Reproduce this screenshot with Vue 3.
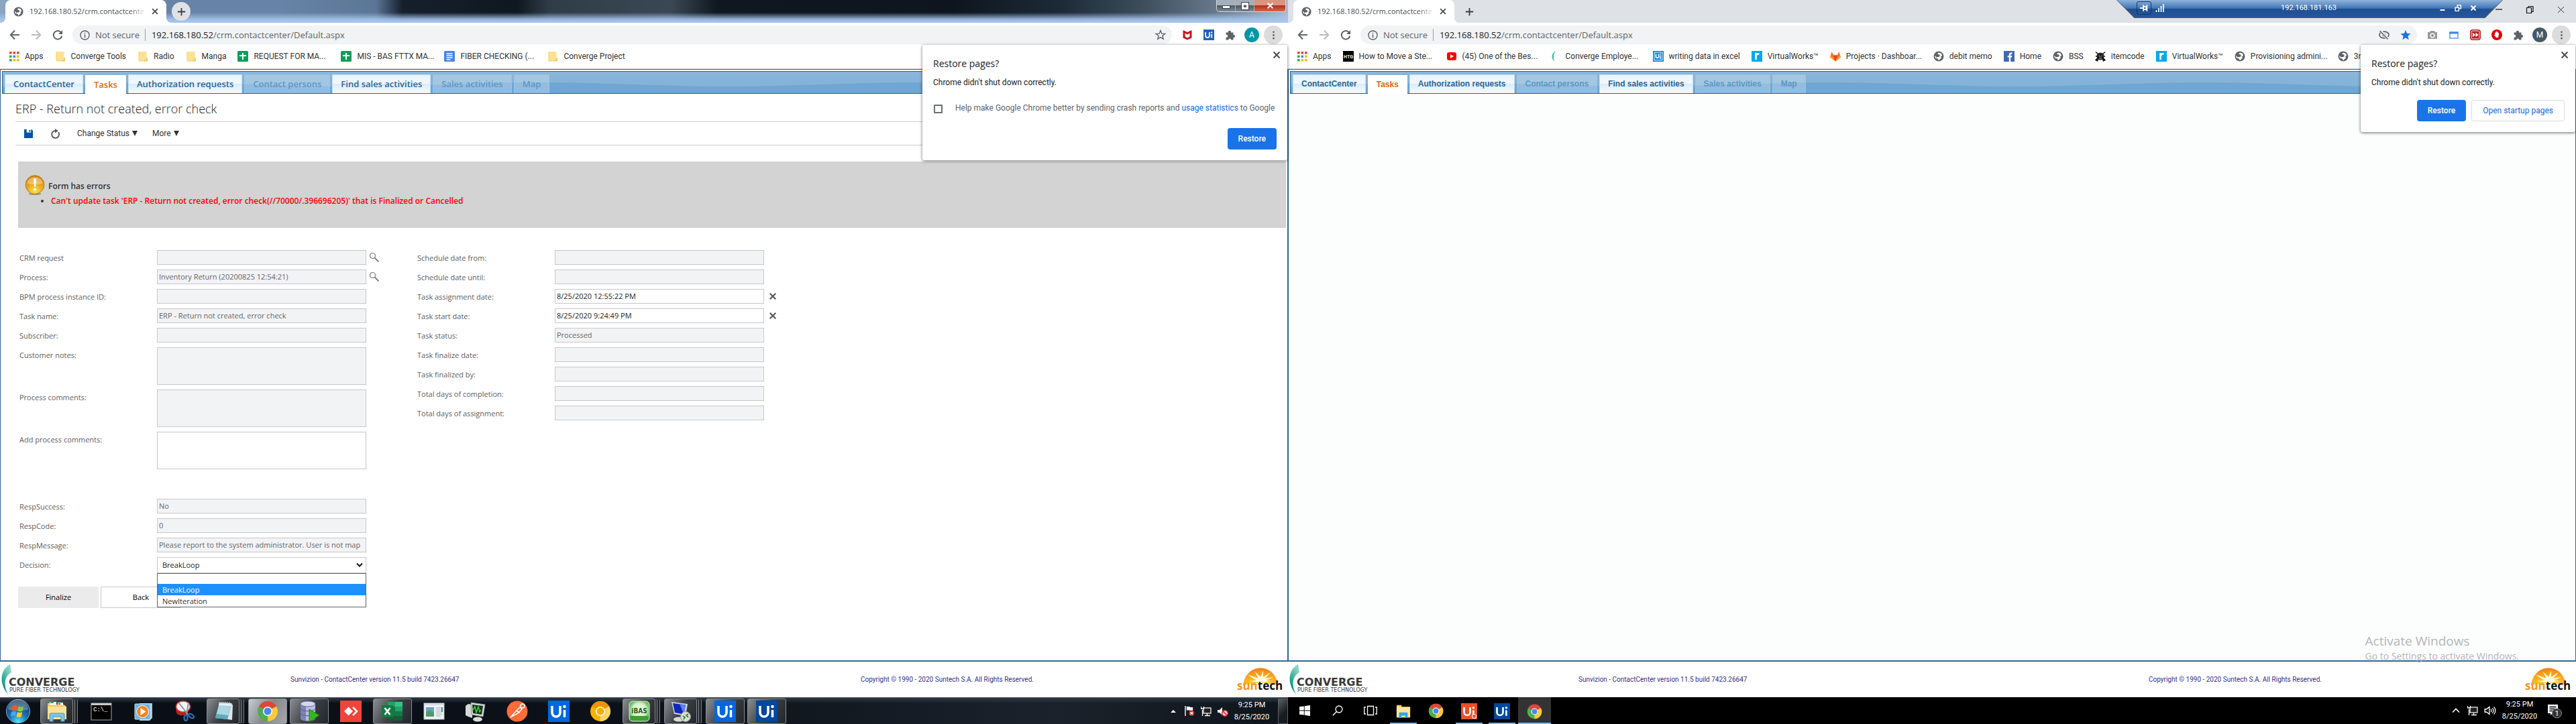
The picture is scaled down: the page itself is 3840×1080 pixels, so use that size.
<script setup>
import { h, ref } from 'vue'

const chromeLogo = (dark) => `
  <circle cx="16" cy="16" r="15" fill="${dark ? '#f5b400' : '#4caf50'}"/>
  <path d="M16 16 3 8.500A15 15 0 0 1 29 8.500Z" fill="${dark ? '#ee9300' : '#e0453a'}"/>
  <path d="M16 16 29 8.500A15 15 0 0 1 16 31Z" fill="${dark ? '#fdd663' : '#fdc93b'}"/>
  <path d="M16 9H29.300L28 7H6Z" fill="${dark ? '#ee9300' : '#e0453a'}"/>
  <circle cx="16" cy="16" r="7" fill="#fff"/><circle cx="16" cy="16" r="5.500" fill="${dark ? '#f9ab00' : '#4688f1'}"/>`

const uiTile = (bg) => `<rect width="32" height="32" fill="${bg}"/>
  <path d="M6 8v10a6 6 0 0 0 12 0V8" fill="none" stroke="#fff" stroke-width="3.500"/>
  <path d="M24.500 14v11" stroke="#fff" stroke-width="3.500"/><circle cx="24.500" cy="9" r="2.300" fill="#fff"/>`

const icons = {
  globe: [16, '<circle cx="8" cy="8" r="7.500" fill="#5f6368"/><path d="M8 2.500 6 4.500l3 1 1 2-2 1.500H5.500l-1 1.500L7 12l1 2.500 2-2.500 2-1.500-1-2 2-1.500-1-3-2-1Z" fill="#fff"/><path d="m2 7 2 1.500 1 3-2-1Z" fill="#fff"/>'],
  close: [16, '<path d="m3.500 3.500 9 9m0-9-9 9" stroke="#4a4d51" stroke-width="2"/>'],
  closeThin: [16, '<path d="m2.500 2.500 11 11m0-11-11 11" stroke="#222" stroke-width="1.100"/>'],
  plus: [16, '<path d="M8 2v12M2 8h12" stroke="#3c4043" stroke-width="2"/>'],
  back: [16, '<path d="M15 8H2m6-6.500L1.800 8 8 14.500" fill="none" stroke="#5f6368" stroke-width="2"/>'],
  forward: [16, '<path d="M1 8h13M8 1.500 14.200 8 8 14.500" fill="none" stroke="#babcbe" stroke-width="2"/>'],
  reload: [16, '<path d="M13.200 4.500A6.300 6.300 0 1 0 14.300 9.500" fill="none" stroke="#5f6368" stroke-width="2"/><path d="M15 1v6H9Z" fill="#5f6368"/>'],
  info: [16, '<circle cx="8" cy="8" r="7" fill="none" stroke="#5f6368" stroke-width="1.500"/><path d="M8 7v5M8 4v1.700" stroke="#5f6368" stroke-width="1.600"/>'],
  star: [16, '<path d="m8 1.500 1.800 4.600 4.900.3-3.800 3.100 1.300 4.800L8 11.600l-4.200 2.700 1.300-4.800L1.300 6.400l4.900-.3Z" fill="none" stroke="#5f6368" stroke-width="1.400"/>'],
  starOn: [16, '<path d="m8 .8 2 5 5.500.4-4.200 3.500 1.400 5.500L8 12.200l-4.700 3 1.400-5.500L.5 6.200 6 5.800Z" fill="#1a73e8"/>'],
  eyeOff: [16, '<ellipse cx="8" cy="8" rx="7" ry="4.800" fill="none" stroke="#5f6368" stroke-width="1.800"/><circle cx="8" cy="8" r="2.600" fill="#5f6368"/><path d="m2 1.500 12 13" stroke="#f1f3f4" stroke-width="4"/><path d="m1.500 2 12 12.500" stroke="#5f6368" stroke-width="1.600"/>'],
  shield: [16, '<path d="M1.500 1 8 4l6.500-3v11.500L8 15.500l-6.500-3Z" fill="#c8141e"/><path d="M4.500 5.500 8 7.500l3.500-2v5L8 12.500l-3.500-2Z" fill="#fff"/>'],
  uiBlue: [32, uiTile('#1f66b4')],
  puzzle: [16, '<path d="M1.500 4.500h3.300a2.200 2.200 0 1 1 4.200 0h3.500V8a2.100 2.100 0 1 1 0 4.100v3.400H9.200a2 2 0 1 0-4 0H1.500v-3.700a2.100 2.100 0 1 0 0-4Z" fill="#5f6368"/>'],
  dots: [16, '<circle cx="8" cy="3" r="1.500" fill="#5f6368"/><circle cx="8" cy="8" r="1.500" fill="#5f6368"/><circle cx="8" cy="13" r="1.500" fill="#5f6368"/>'],
  camera: [16, '<path d="M1 4h3l1-2h6l1 2h3v10H1Z" fill="#9a9a9a"/><circle cx="8" cy="9" r="3.600" fill="#fff"/><circle cx="8" cy="9" r="2" fill="#8a8a8a"/>'],
  windowed: [16, '<rect x="2" y="4" width="12" height="9" fill="#fff" stroke="#5b9bf0" stroke-width="1.500"/><path d="M1.500 5h13" stroke="#4285f4" stroke-width="3"/>'],
  forwardRed: [16, '<rect x=".8" y=".8" width="14.400" height="14.400" rx="3" fill="#fff" stroke="#b3201f" stroke-width="1.600"/><rect x="2.500" y="2.500" width="11" height="11" fill="#b3201f"/><path d="m4 4.500 4 3.500-4 3.500Zm4.500 0 4 3.500-4 3.500Z" fill="#fff"/>'],
  hand: [16, '<circle cx="8" cy="8" r="8" fill="#e60000"/><path d="M5 8V5h1V3.500h1.200V3h1.400v.7h1.200V5h1v3.500L10 12H7L4 8.500Z" fill="#fff"/>'],
  apps: [16, '<g fill="#ea4335"><path d="M1 1h3.500v3.500H1ZM6.500 1H10v3.500H6.500ZM12 1h3.500v3.500H12Z"/></g><path d="M1 6.500h3.500V10H1ZM1 12h3.500v3.500H1Z" fill="#34a853"/><path d="M6.500 6.500H10V10H6.500Z" fill="#4285f4"/><path d="M12 6.500h3.500V10H12ZM6.500 12H10v3.500H6.500ZM12 12h3.500v3.500H12Z" fill="#fbbc05"/>'],
  folder: [16, '<path d="M2 1h11.500v14H2Z" fill="#fde293"/><path d="M10 14.500h4V10" fill="none" stroke="#f0bf3c" stroke-width="1.500"/><path d="M2 1v14h11" fill="none" stroke="#f3cf68"/>'],
  sheet: [16, '<rect width="16" height="16" rx="1.500" fill="#0f9d58"/><path d="M8 3v10M3 7h10" stroke="#fff" stroke-width="2"/>'],
  doc: [16, '<rect width="16" height="16" rx="1.500" fill="#4285f4"/><path d="M3.500 4h9M3.500 7h9M3.500 10h9M3.500 13h6" stroke="#fff" stroke-width="1.500"/>'],
  htg: [16, '<rect width="16" height="16" fill="#000"/><text x="8" y="11" font-family="Roboto, sans-serif" font-size="7" font-weight="700" text-anchor="middle" fill="#eee">HTG</text>'],
  youtube: [16, '<rect x="1" y="2" width="14" height="12" rx="3" fill="#f00"/><path d="m6 5 5 3-5 3Z" fill="#fff"/>'],
  swoosh: [16, '<path d="M9 0C2 4 2 11 7.500 16 5 11 5.500 5 9 0Z" fill="#3dbfa5"/>'],
  uiFrame: [16, '<rect x=".8" y=".8" width="14.400" height="14.400" fill="#fff" stroke="#0a7fd0" stroke-width="1.600"/><rect x="2.500" y="2.500" width="11" height="11" fill="#0a8ad8"/><path d="M4.500 4.500v4a2 2 0 0 0 4 0v-4M11 6.500V12M11 4v1.500" fill="none" stroke="#fff" stroke-width="1.500"/>'],
  virtual: [16, '<rect width="16" height="16" fill="#00a9ee"/><path d="M6.500 3v10M6.500 8c.5-3 2-4 5-3.800" fill="none" stroke="#fff" stroke-width="2.600"/>'],
  gitlab: [16, '<path d="M8 15.500 0 9.500 2.600 1l2.600 5.500h5.600L13.400 1 16 9.500Z" fill="#fc6d26"/><path d="m8 15.500-2.800-9h5.600Z" fill="#e24329"/><path d="m8 15.500-8-6 1.200-3Zm0 0 8-6-1.200-3Z" fill="#fca326"/>'],
  facebook: [16, '<rect width="16" height="16" fill="#4267b2"/><path d="M10.200 16V9.500H12l.4-2.300h-2.200V5.700c0-.8.400-1.200 1.200-1.200h1.100V2.300C10 1.900 7.800 2.500 7.800 5.300v1.900H5.700v2.300h2.100V16Z" fill="#fff"/>'],
  spider: [16, '<circle cx="8" cy="8" r="5.500" fill="#222"/><path d="M1 1.500 5 5M15 1.500 11 5M.5 14 4.500 10l-1 5.500M15.500 14 11.500 10l1 5.500M3 8H1M13 8h2" stroke="#111" stroke-width="1.500"/><path d="m5.500 7 2 1.500M10.500 7l-2 1.500M6 11h4" stroke="#aaa"/>'],
  save: [14, '<path d="M0 0h11.500L14 2v12H0Z" fill="#00549f"/><path d="M4 0h7v5H4Z" fill="#fff"/><path d="M8 1h2v3H8Z" fill="#00549f"/>'],
  refresh: [16, '<path d="M12.800 5.500A5.800 5.800 0 1 1 8 3.200" fill="none" stroke="#555" stroke-width="1.900"/><path d="m7.500 0 5 3.300-5 3.500Z" fill="#555"/>'],
  alert: [32, '<defs><radialGradient id="amber" cx=".5" cy=".85" r=".9"><stop offset="0" stop-color="#ffe14a"/><stop offset=".5" stop-color="#e9a71c"/><stop offset="1" stop-color="#c47c10"/></radialGradient></defs><ellipse cx="16" cy="30" rx="10" ry="2" fill="#a09a85"/><circle cx="16" cy="15.500" r="14.800" fill="url(#amber)" stroke="#b5791a"/><path d="M3 13A13.500 13.500 0 0 1 29 13Q16 17 3 13Z" fill="#fff" opacity=".35"/><path d="M14 5.500h4.200L17.200 19h-2.200Z" fill="#fff"/><circle cx="16" cy="23" r="2.200" fill="#fff"/>'],
  lens: [16, '<circle cx="5.500" cy="5.500" r="4" fill="#fff" stroke="#777" stroke-width="1.200"/><path d="m8.500 8.500 6 6" stroke="#666" stroke-width="1.700"/>'],
  clear: [14, '<path d="m2 2 10 10M12 2 2 12" stroke="#5a5a5a" stroke-width="2.600"/>'],
  orb: [40, '<defs><radialGradient id="orb" cx=".5" cy=".95" r=".9"><stop offset="0" stop-color="#5ce0ff"/><stop offset=".45" stop-color="#1a6fae"/><stop offset="1" stop-color="#17395e"/></radialGradient></defs><circle cx="20" cy="20" r="18.500" fill="url(#orb)" stroke="#84a9c4"/><path d="M4 17A16 16 0 0 1 36 17Q20 22 4 17Z" fill="#fff" opacity=".25"/><path d="M11 12q4-3 8-.5l-1.500 7.500q-4-2-7.500.3Z" fill="#ee5a24"/><path d="M20.500 12q4 2.500 8 0l-1.500 7.500q-4 2-8-.3Z" fill="#8cc63f"/><path d="M9.500 21q4-2.500 7.700-.4L15.800 28q-4-2-7.500.4Z" fill="#3fa9f5"/><path d="M18.800 21q4 2.200 7.700 0L25 28.500q-4 2-7.600-.2Z" fill="#ffcb1f"/>'],
  explorer: [32, '<path d="M2 4h10l2 2h12l4 3v19H2Z" fill="#e9c767"/><path d="M5 2h10v5H5Z" fill="#fff6d0"/><path d="M6 2h5v2H6Z" fill="#3aa655"/><path d="M17 3h8v4h-8Z" fill="#f7f0d5"/><path d="M18 4h3v2h-3Z" fill="#d33"/><path d="M2 9h28v19H2Z" fill="#f8e29a"/><path d="M5 31V21q0-2 2-2h18q2 0 2 2v10h-5v-7H10v7Z" fill="#7cc4e8" stroke="#4a98c6"/>'],
  cmd: [32, '<rect x="1" y="4" width="30" height="25" fill="#000" stroke="#aaa"/><path d="M1 4h30v3H1Z" fill="#c8c8c8"/><text x="4" y="16" font-family="Liberation Mono, monospace" font-size="9" fill="#fff">C:\\_</text>'],
  media: [32, '<path d="M11 4h19v22l-4 4H11Z" fill="#9fcbe8"/><rect x="4" y="5" width="23" height="23" rx="1" fill="#6fb3dd" stroke="#c4e1f3"/><circle cx="15.500" cy="16.500" r="9" fill="#f58220" stroke="#fff"/><path d="m12.500 11 8 5.500-8 5.500Z" fill="#fff"/>'],
  snip: [32, '<ellipse cx="13" cy="14" rx="10" ry="8" fill="#b3231f" transform="rotate(-20 13 14)"/><ellipse cx="14" cy="9" rx="10.500" ry="8" fill="#f4f4f4" stroke="#d8403b" stroke-width="1.500"/><path d="M8 4 23 23M22 3 19 21" stroke="#8b979f" stroke-width="2"/><ellipse cx="18" cy="26" rx="2.500" ry="4" fill="none" stroke="#2a6fb5" stroke-width="2.200"/><ellipse cx="26" cy="23" rx="4.500" ry="2.500" fill="none" stroke="#2a6fb5" stroke-width="2.200" transform="rotate(35 26 23)"/>'],
  notepad: [32, '<path d="m10 3 18 1-6 24-18-2Z" fill="#a8d6e2"/><path d="m10 3 18 1-1 4-18-1Z" fill="#e6f1f3"/><path d="m22 28 6-24 2 3-1 22Z" fill="#d9e6ea"/><path d="m6 20 17 2-1 6-18-2Z" fill="#5fa9bf"/><path d="M10 2v3M13 2v3M16 2v3M19 2v3M22 2v3M25 2v3" stroke="#cdbf9a"/>'],
  chrome: [32, chromeLogo(false)],
  canary: [32, chromeLogo(true)],
  database: [32, '<path d="M3 5v21c0 6 22 6 22 0V5Z" fill="#b9bbe0"/><path d="M3 5v21c2 4 7 4.500 8 4.500V9Z" fill="#7f82b8"/><path d="M3 12c0 5 22 5 22 0M3 19c0 5 22 5 22 0" fill="none" stroke="#555a94"/><ellipse cx="14" cy="5" rx="11" ry="4" fill="#d6d7ef" stroke="#6a6ea6"/><path d="m16 13 15 9-15 10Z" fill="#35b81f" stroke="#1d7a10"/>'],
  anydesk: [32, '<rect width="32" height="32" fill="#ef443b"/><path d="m6 16 6.500-6.500L19 16l-6.500 6.500Z" fill="#fff"/><path d="m19 10 6 6-6 6" fill="none" stroke="#fff" stroke-width="2.600"/>'],
  excel: [32, '<rect x="9" y="2" width="22" height="28" fill="#21a366"/><path d="M9 9h11v14H9Z" fill="#107c41"/><path d="M20 2h11v7H20Z" fill="#33c481"/><path d="M20 16h11v7H20Z" fill="#107c41"/><path d="M9 23h22v7H9Z" fill="#185c37"/><rect x="0" y="7" width="17" height="18" fill="#107c41"/><path d="m4.500 11 8 10M12.500 11l-8 10" stroke="#fff" stroke-width="2.600"/>'],
  report: [32, '<rect x="1" y="4" width="30" height="24" fill="#eef2f4" stroke="#b5bcc2"/><path d="M1 4h30v3H1Z" fill="#d3dce6"/><path d="M4 10h12v14H4Z" fill="#6d9fbd"/><path d="M4 18q6-6 12 1v5H4Z" fill="#4c9a6b"/><path d="M19 11h9M19 14h9M19 17h9M19 20h9M19 23h7" stroke="#9aa"/><path d="M27 10h2v7h-2Z" fill="#4c8a8b"/>'],
  monitor: [32, '<path d="m1 8 4-3 6 1v20l-6-2-4-2Z" fill="#d5d8d5"/><path d="m9 3 21 3-3 18-17-3Z" fill="#d9dcd8" stroke="#8c908b"/><path d="m11 6 16 2-2 13-13-2Z" fill="#12321a"/><path d="m12 14 3-5 2 9 3-9 2 8 2-3" fill="none" stroke="#38d048" stroke-width="1.500"/><ellipse cx="19" cy="28" rx="7" ry="3.500" fill="#dadcda"/>'],
  postman: [32, '<circle cx="16" cy="16" r="15.500" fill="#ff6c37"/><path d="m6 25 9-10 4 3ZM15 15l5-5 3 3-5 5Z" fill="none" stroke="#fff" stroke-width="1.500"/><circle cx="24" cy="8" r="3" fill="none" stroke="#fff" stroke-width="1.500"/>'],
  uiBright: [32, uiTile('#0067df')],
  uiNavy: [32, uiTile('#00479d')],
  uiOrange: [32, uiTile('#f04e23') + '<circle cx="26" cy="26" r="4" fill="#f04e23" stroke="#fff" stroke-width="1.400"/>'],
  ibas: [32, '<defs><radialGradient id="ibas" cy=".45"><stop offset="0" stop-color="#f6fff0"/><stop offset=".7" stop-color="#d2f0c4"/><stop offset="1" stop-color="#6cc05c"/></radialGradient></defs><rect x="1" y="1" width="30" height="30" rx="5" fill="url(#ibas)" stroke="#d6f0cf"/><path d="M2 23h28v3q0 4-4 4H6q-4 0-4-4Z" fill="#3f9f36"/><text x="16" y="19" font-family="DejaVu Sans Condensed, sans-serif" font-size="10" font-weight="700" text-anchor="middle" fill="#245b1b">iBAS</text>'],
  remote: [32, '<path d="m2 2 24 3-3 18-17-3Z" fill="#c9d3e2"/><path d="m4 4 19 2.500-2.500 14L7 18Z" fill="#1226b8"/><path d="m14 5 9 1.500-2.500 14Z" fill="#5d83ea"/><ellipse cx="13" cy="28" rx="8" ry="3.500" fill="#d7dad8"/><circle cx="23" cy="24" r="7.500" fill="#d9ddd9" stroke="#8a8f8a"/><path d="m19 23 3 2-2 3M27 20l-3 2 3 3" fill="none" stroke="#2d8f2d" stroke-width="1.800"/>'],
  flag: [16, '<path d="M1 0v16" stroke="#fff" stroke-width="1.500"/><path d="M3 1h5l1 1h4v6H9L8 7H3Z" fill="#f2f2f2"/><circle cx="11" cy="11.500" r="4.500" fill="#d5222a"/><path d="m9 9.500 4 4m0-4-4 4" stroke="#fff" stroke-width="1.500"/>'],
  network: [16, '<rect x="4" y="3" width="11" height="8" fill="#222" stroke="#fff" stroke-width="1.200"/><path d="M9.500 11v3M6 14.500h8M2.500 6v9M.5 1v3h4V1" fill="none" stroke="#fff" stroke-width="1.300"/>'],
  muted: [16, '<path d="M0 6h3l4-4v12L3 10H0Z" fill="#f5f5f5"/><circle cx="11" cy="11" r="4.300" fill="#f5d5d5" stroke="#d5222a" stroke-width="1.600"/><path d="m8 8 6 6" stroke="#d5222a" stroke-width="1.600"/>'],
  speaker: [16, '<path d="M1 6h2.500L7 3v10l-3.500-3H1Z" fill="none" stroke="#fff" stroke-width="1.200"/><path d="M9 6q1.500 2 0 4M11 4.500q2.800 3.500 0 7M13 3q4 5 0 10" fill="none" stroke="#fff" stroke-width="1.100"/>'],
  up: [16, '<path d="m3 10.500 5-5 5 5" fill="none" stroke="#fff" stroke-width="1.600"/>'],
  upSolid: [16, '<path d="m4 10 4-4 4 4Z" fill="#fff"/>'],
  notice: [24, '<path d="M2 3h15v13h-8l-3 3v-3H2Z" fill="#fff"/><path d="M4.500 6.500h10M4.500 9.500h10M4.500 12.500h7" stroke="#000" stroke-width="1.300"/><circle cx="15.500" cy="16" r="7" fill="#333" stroke="#888"/><text x="15.500" y="20" font-family="Roboto, sans-serif" font-size="11" text-anchor="middle" fill="#fff">1</text>'],
  windows: [16, '<path d="M0 2.300 6.800 1.400v6.100H0ZM7.700 1.200 16 0v7.500H7.700ZM0 8.500h6.800v6.100L0 13.700ZM7.700 8.500H16V16l-8.300-1.200Z" fill="#fff"/>'],
  search: [16, '<circle cx="10" cy="6" r="5" fill="none" stroke="#fff" stroke-width="1.300"/><path d="M6.500 9.500.8 15.200" stroke="#fff" stroke-width="1.500"/>'],
  tasks: [20, '<path d="M5.500 3.500h9v13h-9ZM3 5H.700v10H3M17 5h2.300v10H17" fill="none" stroke="#fff" stroke-width="1.300"/>'],
  explorerFlat: [24, '<path d="M1 2h8v3h14v17H1Z" fill="#f5cf5b"/><path d="M1 5h22v17H1Z" fill="#ffe69a"/><path d="M5 23v-8q0-1 1-1h12q1 0 1 1v8h-4v-4H9v4Z" fill="#2fa8e0"/>'],
  minimize: [16, '<path d="M3 8h10" stroke="#111" stroke-width="1.200"/>'],
  restore: [16, '<path d="M3.500 5.500h7v8h-7ZM6 5.500v-2h7v8h-2.500" fill="none" stroke="#111" stroke-width="1.200"/>'],
  pin: [16, '<path d="M1 8h6M7 2.500v11M7.500 5.500H12v5H7.500M13 2.500v11" fill="none" stroke="#fff" stroke-width="2"/>'],
  signal: [16, '<path d="M2.500 14v-3M6 14V8M9.500 14V5M13 14V2" stroke="#fff" stroke-width="1.700"/>'],
  barMin: [16, '<path d="M4 11.500h8" stroke="#fff" stroke-width="2.200"/>'],
  barRestore: [16, '<path d="M3.500 7h6v6h-6ZM7 7V3h6v6h-3" fill="none" stroke="#fff" stroke-width="1.600"/>'],
  barClose: [16, '<path d="m4 4 8 8m0-8-8 8" stroke="#fff" stroke-width="2.200"/>'],
}

const Icon = (props) => {
  const [box, body] = icons[props.name]
  const size = props.size || 16
  return h('svg', { viewBox: `0 0 ${box} ${box}`, width: size, height: size, 'aria-hidden': 'true', innerHTML: body })
}
Icon.props = ['name', 'size']

const moduleTabs = [
  { name: 'ContactCenter' },
  { name: 'Tasks', active: true },
  { name: 'Authorization requests' },
  { name: 'Contact persons', disabled: true },
  { name: 'Find sales activities' },
  { name: 'Sales activities', disabled: true },
  { name: 'Map', disabled: true },
]

const desktops = [
  {
    id: 'local',
    omni: ['star'],
    extensions: ['shield', 'uiBlue', 'puzzle'],
    avatar: 'A',
    bookmarks: [
      ['apps', 'Apps'], ['folder', 'Converge Tools'], ['folder', 'Radio'], ['folder', 'Manga'],
      ['sheet', 'REQUEST FOR MA...', true], ['sheet', 'MIS - BAS FTTX MA...', true],
      ['doc', 'FIBER CHECKING (...', true], ['folder', 'Converge Project'],
    ],
  },
  {
    id: 'remote',
    omni: ['eyeOff', 'starOn'],
    extensions: ['camera', 'windowed', 'forwardRed', 'hand', 'puzzle'],
    avatar: 'M',
    bookmarks: [
      ['apps', 'Apps'], ['htg', 'How to Move a Ste...', true], ['youtube', '(45) One of the Bes...', true],
      ['swoosh', 'Converge Employe...', true], ['uiFrame', 'writing data in excel'], ['virtual', 'VirtualWorks™'],
      ['gitlab', 'Projects · Dashboar...', true], ['globe', 'debit memo'], ['facebook', 'Home'], ['globe', 'BSS'],
      ['spider', 'itemcode'], ['virtual', 'VirtualWorks™'], ['globe', 'Provisioning admini...', true], ['globe', '3rd'],
    ],
  },
]

const requestFields = [
  { id: 'crm', label: 'CRM request', icon: 'lens' },
  { id: 'process', label: 'Process:', value: 'Inventory Return (20200825 12:54:21)', icon: 'lens' },
  { id: 'bpm', label: 'BPM process instance ID:' },
  { id: 'task', label: 'Task name:', value: 'ERP - Return not created, error check' },
  { id: 'subscriber', label: 'Subscriber:' },
  { id: 'notes', label: 'Customer notes:', area: true },
  { id: 'comments', label: 'Process comments:', area: true },
  { id: 'add', label: 'Add process comments:', area: true, editable: true },
]
const scheduleFields = [
  { id: 'from', label: 'Schedule date from:' },
  { id: 'until', label: 'Schedule date until:' },
  { id: 'assigned', label: 'Task assignment date:', value: '8/25/2020 12:55:22 PM', editable: true, icon: 'clear' },
  { id: 'started', label: 'Task start date:', value: '8/25/2020 9:24:49 PM', editable: true, icon: 'clear' },
  { id: 'status', label: 'Task status:', value: 'Processed' },
  { id: 'finalized', label: 'Task finalize date:' },
  { id: 'by', label: 'Task finalized by:' },
  { id: 'completion', label: 'Total days of completion:' },
  { id: 'assignment', label: 'Total days of assignment:' },
]
const responseFields = [
  { id: 'success', label: 'RespSuccess:', value: 'No' },
  { id: 'code', label: 'RespCode:', value: '0' },
  { id: 'message', label: 'RespMessage:', value: 'Please report to the system administrator. User is not map' },
]
const decision = ref('BreakLoop')
const options = ['', 'BreakLoop', 'NewIteration']

const localTasks = [
  ['explorer', 'open stacked'], ['cmd', ''], ['media', ''], ['snip', ''], ['notepad', 'open stacked'],
  ['chrome', 'open current'], ['database', 'open'], ['anydesk', ''], ['excel', 'open'], ['report', ''],
  ['monitor', ''], ['postman', ''], ['uiBright', ''], ['canary', ''], ['ibas', 'open stacked'],
  ['remote', 'open stacked'], ['uiBright', 'open'], ['uiNavy', 'open'],
]
const remoteTasks = [
  ['windows', '', 16], ['search', '', 16], ['tasks', '', 20], ['explorerFlat', 'running', 22], ['chrome', '', 23],
  ['uiOrange', 'running', 24], ['uiNavy', 'running', 24], ['chrome', 'running current', 23],
]
</script>

<template>
  <div class="screens">
    <section v-for="d in desktops" :key="d.id" class="desktop" :class="d.id">
      <header class="titlebar">
        <div class="page-tab">
          <Icon name="globe" :size="15" />
          <span class="page-title">192.168.180.52/crm.contactcente</span>
          <button class="plain" aria-label="Close tab"><Icon name="close" :size="14" /></button>
        </div>
        <button class="new-tab" aria-label="New tab"><Icon name="plus" :size="15" /></button>
        <div v-if="d.id === 'local'" class="aero-buttons">
          <button aria-label="Minimize"><span class="dash"></span></button>
          <button aria-label="Restore"><span class="square"></span></button>
          <button class="exit" aria-label="Close"><Icon name="barClose" :size="15" /></button>
        </div>
        <div v-else class="flat-buttons">
          <button aria-label="Minimize"><Icon name="minimize" /></button>
          <button aria-label="Restore"><Icon name="restore" /></button>
          <button aria-label="Close"><Icon name="closeThin" :size="13" /></button>
        </div>
        <div v-if="d.id === 'remote'" class="session">
          <div class="session-bar">
            <button class="pin" aria-label="Pin"><Icon name="pin" :size="14" /></button>
            <Icon name="signal" />
            <span class="session-name">192.168.181.163</span>
            <button aria-label="Minimize"><Icon name="barMin" :size="14" /></button>
            <button aria-label="Restore"><Icon name="barRestore" :size="14" /></button>
            <button aria-label="Close"><Icon name="barClose" :size="14" /></button>
          </div>
        </div>
      </header>

      <nav class="toolbar">
        <button class="slot" aria-label="Back"><Icon name="back" /></button>
        <button class="slot" aria-label="Forward"><Icon name="forward" /></button>
        <button class="slot" aria-label="Reload"><Icon name="reload" /></button>
        <div class="omnibox">
          <Icon name="info" :size="15" />
          <span class="secure">Not secure</span>
          <span class="url"><b>192.168.180.52</b>/crm.contactcenter/Default.aspx</span>
          <button v-for="n in d.omni" :key="n" class="slot" :aria-label="n"><Icon :name="n" /></button>
        </div>
        <button v-for="n in d.extensions" :key="n" class="slot" :aria-label="n"><Icon :name="n" /></button>
        <button class="slot" aria-label="Profile"><span class="avatar">{{ d.avatar }}</span></button>
        <button class="slot menu" aria-label="Menu"><Icon name="dots" :size="15" /></button>
      </nav>

      <nav class="bookmarks">
        <a v-for="([icon, text, cut], i) in d.bookmarks" :key="i" href="#" :class="{ cut }">
          <Icon :name="icon" /><span>{{ text }}</span>
        </a>
      </nav>

      <main class="frame">
        <nav class="modules">
          <a v-for="t in moduleTabs" :key="t.name" href="#" :class="{ active: t.active, disabled: t.disabled }">{{ t.name }}</a>
        </nav>

        <div v-if="d.id === 'local'" class="task">
          <h1>ERP - Return not created, error check</h1>
          <div class="actions">
            <button aria-label="Save"><Icon name="save" :size="13" /></button>
            <button aria-label="Refresh"><Icon name="refresh" :size="15" /></button>
            <button class="status">Change Status<i></i></button>
            <button>More<i></i></button>
          </div>

          <div class="errors" role="alert">
            <div class="errors-head"><Icon name="alert" :size="30" /><strong>Form has errors</strong></div>
            <ul><li>Can't update task 'ERP - Return not created, error check(//70000/.396696205)' that is Finalized or Cancelled</li></ul>
          </div>

          <form @submit.prevent>
            <div class="columns">
              <div v-for="(col, c) in [requestFields, scheduleFields]" :key="c" class="fields">
                <div v-for="f in col" :key="f.id" class="field">
                  <label :for="f.id">{{ f.label }}</label>
                  <textarea v-if="f.area" :id="f.id" :disabled="!f.editable"></textarea>
                  <input v-else :id="f.id" type="text" :value="f.value" :disabled="!f.editable" />
                  <button v-if="f.icon" type="button" :class="f.icon" :aria-label="f.icon"><Icon :name="f.icon" :size="f.icon === 'lens' ? 16 : 12" /></button>
                </div>
              </div>
            </div>

            <div class="fields response">
              <div v-for="f in responseFields" :key="f.id" class="field">
                <label :for="f.id">{{ f.label }}</label>
                <input :id="f.id" type="text" :value="f.value" disabled />
              </div>
              <div class="field">
                <label for="decision">Decision:</label>
                <div class="picker">
                  <select id="decision" v-model="decision">
                    <option v-for="o in options" :key="o" :value="o">{{ o }}</option>
                  </select>
                  <svg class="chevron" viewBox="0 0 10 8" width="10" height="8"><path d="m1 1.500 4 4 4-4" fill="none" stroke="#111" stroke-width="2" /></svg>
                  <ul class="listbox" role="listbox">
                    <li v-for="o in options" :key="o" role="option" :aria-selected="o === decision">{{ o }}</li>
                  </ul>
                </div>
              </div>
            </div>

            <div class="submit">
              <button type="submit">Finalize</button>
              <button type="button" class="outlined">Back</button>
            </div>
          </form>
        </div>

        <div v-else class="activate">
          <p class="big">Activate Windows</p>
          <p>Go to Settings to activate Windows.</p>
        </div>
      </main>

      <footer class="credits">
        <svg class="converge" viewBox="0 0 136 48" width="136" height="48">
          <defs><linearGradient id="leaf" x1="0" y1="1" x2=".5" y2="0"><stop offset=".3" stop-color="#0c9c80" /><stop offset="1" stop-color="#8fd6c8" /></linearGradient></defs>
          <path d="M15 1C0 9-2 30 12 46 5 33 6 19 17 13Q16 6 15 1Z" fill="url(#leaf)" />
          <g font-family="DejaVu Sans, sans-serif" fill="#3a3a3a">
            <text x="13" y="33" font-size="16" font-weight="700">CONVERGE</text>
            <text x="14" y="42" font-size="8">PURE FIBER TECHNOLOGY</text>
          </g>
        </svg>
        <span class="version">Sunvizion - ContactCenter version 11.5 build 7423.26647</span>
        <span class="copyright">Copyright © 1990 - 2020 Suntech S.A. All Rights Reserved.</span>
        <svg class="suntech" viewBox="0 0 74 46" width="74" height="46">
          <defs><radialGradient id="sun" cx=".5" cy="1" r="1"><stop offset="0" stop-color="#ffe45c" /><stop offset=".5" stop-color="#fdb022" /><stop offset="1" stop-color="#f07f14" /></radialGradient></defs>
          <path d="M10 31C14-3 58-3 62 31Q36 24 10 31Z" fill="url(#sun)" />
          <path d="m36 27-18-2 12-1-14-9 17 6-6-11 9 9 4-10v10l11-7-8 9 12-2-11 5 9 1Z" fill="#fffbe0" />
          <text x="1" y="38" font-family="Open Sans, sans-serif" font-size="17" font-weight="700" fill="#f7941e">sun<tspan fill="#111">tech</tspan></text>
        </svg>
      </footer>

      <footer v-if="d.id === 'local'" class="taskbar">
        <button class="start" aria-label="Start"><Icon name="orb" :size="38" /></button>
        <button v-for="([name, state], i) in localTasks" :key="i" class="task-button" :class="state" :aria-label="name"><Icon :name="name" :size="32" /></button>
        <div class="tray">
          <Icon name="upSolid" /><Icon name="flag" :size="15" /><Icon name="network" /><Icon name="muted" />
        </div>
        <time class="clock"><span>9:25 PM</span><span>8/25/2020</span></time>
        <button class="peek" aria-label="Show desktop"></button>
      </footer>
      <footer v-else class="taskbar">
        <button v-for="([name, state, size], i) in remoteTasks" :key="i" class="task-button" :class="state" :aria-label="name"><Icon :name="name" :size="size" /></button>
        <div class="tray">
          <Icon name="up" /><Icon name="network" /><Icon name="speaker" :size="18" />
        </div>
        <time class="clock"><span>9:25 PM</span><span>8/25/2020</span></time>
        <button class="inbox" aria-label="Notifications"><Icon name="notice" :size="24" /></button>
      </footer>

      <aside class="bubble">
        <button class="plain dismiss" aria-label="Close"><Icon name="close" :size="16" /></button>
        <h2>Restore pages?</h2>
        <p>Chrome didn't shut down correctly.</p>
        <label v-if="d.id === 'local'" class="consent">
          <input type="checkbox" />
          <span>Help make Google Chrome better by sending crash reports and <a href="#">usage statistics</a> to Google</span>
        </label>
        <div class="choices">
          <button class="primary">Restore</button>
          <button v-if="d.id === 'remote'" class="secondary">Open startup pages</button>
        </div>
      </aside>
    </section>
  </div>
</template>

<style>
body { margin: 0; background: #fff; }
</style>

<style scoped>
* { box-sizing: border-box; }
button { padding: 0; border: 0; background: none; font: inherit; color: inherit; display: flex; align-items: center; justify-content: center; }
a { text-decoration: none; color: inherit; }
svg { flex: none; }

.screens { display: flex; min-height: 100vh; font: 12px/16px Roboto, sans-serif; color: #333; }
.desktop { position: relative; flex: 1 1 0; min-width: 0; display: flex; flex-direction: column; background: #fff; }

/* browser chrome */
.titlebar { position: relative; display: flex; height: 34px; padding-left: 8px; background: #dee1e6; }
.local .titlebar {
  background:
    linear-gradient(transparent 55%, rgba(166, 197, 238, 0.9) 85%, #a9c7ef),
    linear-gradient(90deg, #8aa5c4 0, #6783a5 240px, #6783a5 420px, #5b7697 560px, #16202d 600px, #0f1720 770px, #2f3d49 820px, #3a4855 1000px, #0f1720 1070px, #0e151e 1420px, #1c2a38 1580px, #3c4c5b 1700px, #6d8092 1830px, #a9bccd 100%);
}
.page-tab { position: relative; display: flex; align-items: center; width: 240px; padding: 0 10px 0 12px; border-radius: 8px 8px 0 0; background: #fff; }
.page-tab::before, .page-tab::after { content: ''; position: absolute; bottom: 0; width: 8px; height: 8px; }
.page-tab::before { left: -8px; background: radial-gradient(circle at 0 0, transparent 8px, #fff 8px); }
.page-tab::after { right: -8px; background: radial-gradient(circle at 100% 0, transparent 8px, #fff 8px); }
.page-title { flex: 1; margin: 0 4px 0 9px; white-space: nowrap; font-family: "Open Sans", sans-serif; font-size: 11px; background: linear-gradient(90deg, #3c4043 85%, #d5d6d8 96%); background-clip: text; -webkit-background-clip: text; color: transparent; }
.new-tab { width: 28px; height: 28px; margin: 3px 0 0 8px; border-radius: 50%; }
.local .new-tab { background: #dee1e6; }
.aero-buttons { display: flex; height: 18px; margin: 0 3px 0 auto; border: 1px solid #cfd8e0; border-top: 0; border-radius: 0 0 5px 5px; overflow: hidden; }
.aero-buttons button { width: 28px; border-right: 1px solid #aab4bd; background: linear-gradient(#a3afb9 45%, #4d5a66 50%, #7d8b98); }
.aero-buttons .exit { width: 46px; border: 0; background: linear-gradient(#d99480 45%, #b5301b 50%, #d9654a); }
.dash { width: 12px; height: 5px; margin-top: 4px; border: 1px solid #444; background: #fff; }
.square { width: 10px; height: 10px; border: 3px solid #fff; outline: 1px solid #444; }
.flat-buttons { display: flex; margin-left: auto; }
.flat-buttons button { width: 46px; height: 28px; }
.session { position: absolute; top: 0; right: 109px; width: 576px; height: 27px; padding: 0 1px 1px; background: #54595f; clip-path: polygon(0 0, 100% 0, 95.4% 100%, 4.600% 100%); }
.session-bar { display: flex; align-items: center; height: 26px; padding: 0 32px 2px 29px; color: #fff; background: linear-gradient(#8fb3dc, #3f74b4 48%, #1f4f92 50%, #24569c); clip-path: polygon(0 0, 100% 0, 95.4% 100%, 4.600% 100%); }
.session-bar button { width: 23px; height: 20px; }
.session-bar .pin { width: 22px; margin-right: 5px; border: 1px solid #1b3558; border-radius: 3px; }
.session-name { flex: 1; padding-left: 26px; text-align: center; font-size: 11px; }

.toolbar { display: flex; align-items: center; height: 36px; padding: 0 6px; }
.slot { flex: none; width: 32px; height: 28px; }
.omnibox { flex: 1; display: flex; align-items: center; height: 28px; margin: 0 7px 0 6px; padding: 0 1px 0 11px; border-radius: 14px; background: #f1f3f4; font: 13px/18px "Open Sans", sans-serif; color: #5f6368; }
.secure { margin: 0 8px; }
.url { flex: 1; padding-left: 9px; border-left: 1px solid #9aa0a6; }
.url b { font-weight: 400; color: #202124; }
.avatar { width: 22px; height: 22px; border-radius: 50%; line-height: 22px; color: #fff; background: #0097a7; }
.remote .avatar { background: #455a64; }
.menu { width: 28px; margin: 0 2px; border-radius: 50%; background: #dcdcdc; }

.bookmarks { display: flex; align-items: center; gap: 17px; height: 33px; padding: 0 0 5px 13px; border-bottom: 1px solid #d5d7da; overflow: hidden; white-space: nowrap; }
.bookmarks a { flex: none; display: flex; align-items: center; gap: 8px; }
.bookmarks .cut { width: 137px; }

/* application */
.frame { position: relative; flex: 1; padding: 2px 0 0 2px; border: 1px solid #336699; border-bottom-width: 2px; }
.remote .frame { background: #fcfefd; }
.modules {
  display: flex; align-items: flex-end; gap: 3px; height: 34px; padding-left: 3px; border: 1px solid #2f6395; border-right: 0;
  background: url("data:image/svg+xml,%3Csvg xmlns='http://www.w3.org/2000/svg' width='560' height='32'%3E%3Cpath d='M0 16C100 16 180 22 280 22S460 16 560 16V32H0Z' fill='%236fa6d3'/%3E%3C/svg%3E") 240px 0, linear-gradient(#8ab6da, #80b1d7);
  font: 600 13px/28px "Open Sans", sans-serif; color: #2a6596;
}
.remote .modules { font: 700 12px/28px "Liberation Sans", sans-serif; }
.modules a { height: 28px; padding: 0 12px; border: 1px solid #c5dff3; border-bottom: 0; background: linear-gradient(#e9f4fd, #f1f8fe 45%, #dcecfa 50%, #f4faff); line-height: 27px; }
.modules .active { z-index: 1; margin-bottom: -1px; border-color: #fff; background: #fff; color: #dd6a0b; }
.modules .disabled { border-color: #9cc4e3; background: rgba(255, 255, 255, 0.25); color: #5e97c4; }

h1 { margin: 0 0 0 20px; padding-top: 4px; height: 42px; border-bottom: 1px solid #ccc; font: 300 18px/37px "Open Sans", sans-serif; color: #222; }
.actions { display: flex; align-items: center; gap: 26px; height: 35px; margin-left: 20px; padding-left: 13px; border-bottom: 1px solid #ccc; }
.actions i { margin-left: 4px; border: 4px solid transparent; border-top: 8px solid #333; border-bottom: 0; }
.status { margin: 0 -4px 0 -1px; }

.errors { margin: 24px 2px 0 24px; padding: 20px 10px 31px; background: #d3d3d3; font: 600 12px/18px "Open Sans", sans-serif; }
.errors-head { display: flex; align-items: center; gap: 5px; height: 30px; }
.errors-head strong { padding-top: 4px; font-weight: 600; }
.errors ul { margin: 0; padding-left: 39px; }
.errors li::marker { color: #333; }
.errors li { color: #f00; }

form { margin: 33px 0 0 24px; font: 11px/22px "Open Sans", sans-serif; color: #5e5e5e; }
.columns { display: flex; gap: 76px; padding-left: 2px; }
.fields { display: flex; flex-direction: column; gap: 7px; }
.response { margin-top: 44px; padding-left: 2px; }
.field { display: flex; align-items: flex-start; }
.field label { width: 205px; line-height: 24px; height: 22px; }
input[type='text'], textarea, select { display: block; width: 312px; height: 22px; margin: 0; padding: 0 2px; border: 1px solid #c8c8c8; border-radius: 0; background: #fff; font: inherit; color: #222; resize: none; appearance: none; }
input:disabled, textarea:disabled { background: #f2f3f5; color: #666; }
textarea { height: 56px; }
.field button { height: 22px; margin: 0 -20px 0 4px; }
.field .clear { margin: 0 -19px 0 7px; }
.picker { position: relative; width: 312px; }
.picker select { height: 24px; padding: 0 7px; }
.chevron { position: absolute; right: 5px; top: 8px; }
.listbox { position: absolute; z-index: 1; top: 24px; left: 0; width: 100%; margin: 0; padding: 0; border: 1px solid #666; background: #fff; list-style: none; line-height: 17px; color: #333; }
.listbox li { height: 17px; padding: 0 7px; }
.listbox li:first-child { height: 15px; }
.listbox [aria-selected='true'] { background: #1e90ff; color: #fff; }
.submit { display: flex; gap: 3px; margin-top: 20px; color: #000; }
.submit button { width: 120px; height: 32px; background: #ebebeb; }
.submit .outlined { border: 1px solid #c8c8c8; background: #fff; }

.activate { position: absolute; right: 84px; bottom: -4px; font: 14px/20px "Open Sans", sans-serif; color: #b4b6b6; white-space: nowrap; }
.activate p { margin: 0; }
.activate .big { font-size: 19px; line-height: 26px; }

.credits { display: flex; align-items: center; height: 53px; font-size: 10px; color: #35308a; }
.version { margin-left: 297px; width: 850px; }
.suntech { margin: 0 3px 0 auto; }
.copyright { flex: none; }

/* popup */
.bubble { position: absolute; z-index: 2; top: 67px; right: 1px; padding: 17px 16px 16px; border-radius: 3px; background: #fff; box-shadow: 0 1px 4px rgba(0, 0, 0, 0.6); color: #202124; }
.local .bubble { width: 544px; }
.remote .bubble { width: 320px; }
.bubble h2 { margin: 0; font: 400 14px/22px "Open Sans", sans-serif; }
.bubble p { margin: 9px 0 0; }
.dismiss { position: absolute; top: 7px; right: 8px; }
.consent { display: flex; align-items: center; gap: 19px; margin-top: 21px; color: #5f6368; white-space: nowrap; }
.consent input { appearance: none; width: 13px; height: 13px; margin: 4px 0 0 1px; border: 2px solid #6b6e72; border-radius: 1px; }
.consent a { color: #1a66e0; }
.choices { display: flex; justify-content: flex-end; gap: 8px; margin-top: 18px; }
.local .choices { margin-top: 22px; }
.choices button { height: 32px; padding: 0 16px; border-radius: 4px; }
.primary { background: #1a73e8; color: #fff; font-weight: 500; }
.choices .secondary { border: 1px solid #dadce0; color: #1a66e0; }

/* taskbar */
.taskbar { display: flex; align-items: center; height: 40px; color: #fff; background: #000; }
.local .taskbar { gap: 4px; border-top: 1px solid #55606b; background: linear-gradient(#2e3944, transparent 8px), linear-gradient(90deg, #0a0f16, #0c1119 50%, #1b222b 82%, #0e141a); }
.start { width: 54px; margin-right: 2px; }
.task-button { width: 58px; height: 38px; }
.open { border: 1px solid #8a8d90; border-radius: 3px; background: linear-gradient(120deg, #8a8d90, #3c4045 50%, #23272c); }
.stacked { width: 49px; margin-right: 9px; box-shadow: 3px 0 0 -1px #23272c, 4px 0 0 -1px #8a8d90, 7px 0 0 -1px #23272c, 8px 0 0 -1px #7a7d80; }
.local .current { background: linear-gradient(120deg, #c9cbcd, #85888b 50%, #a5a7a9); }
.remote .task-button { width: 49px; height: 40px; }
.remote .running { padding-top: 2px; background: linear-gradient(#76b9ed, #76b9ed) center bottom / 40px 2px no-repeat; }
.remote .current { background-color: #333; background-size: 100% 2px; }
.tray { display: flex; align-items: center; gap: 9px; margin-left: auto; }
.clock { display: flex; flex-direction: column; align-items: center; width: 70px; font-size: 11px; line-height: 18px; }
.local .clock { margin-left: -4px; }
.peek { width: 15px; height: 38px; border: 1px solid #5a6168; background: linear-gradient(135deg, #5a6066, #171c21 60%); }
.inbox { width: 36px; height: 40px; padding-right: 2px; margin-right: 13px; }
</style>
